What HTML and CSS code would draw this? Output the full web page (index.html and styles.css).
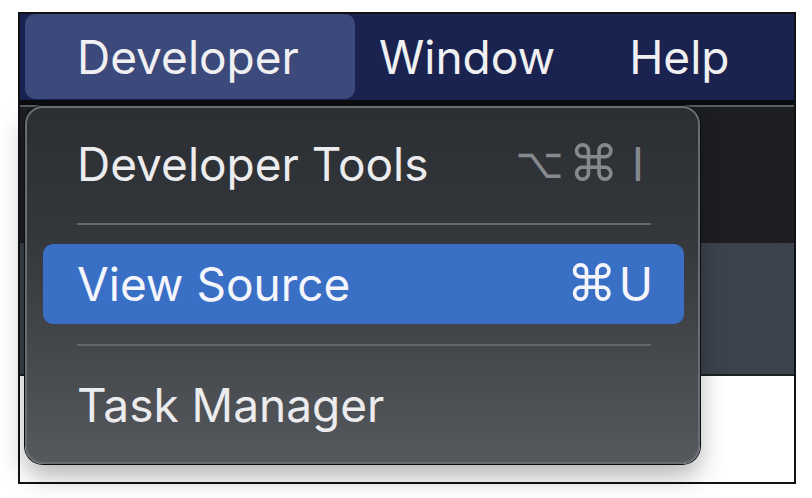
FILE: index.html
```html
<!DOCTYPE html>
<html lang="en">
<head>
<meta charset="utf-8">
<title>Developer menu</title>
<link rel="stylesheet" href="styles.css">
</head>
<body>
<div class="frame">
  <div class="menubar">
    <div class="mb-item active">Developer</div>
    <div class="mb-item window">Window</div>
    <div class="mb-item help">Help</div>
  </div>
  <div class="desk">
    <div class="win-top"></div>
    <div class="win-bottom"></div>
  </div>
  <div class="menu">
    <div class="item">
      <span class="label">Developer Tools</span>
      <span class="shortcut dim"><span class="sym opt">⌥</span><span class="sym cmd">⌘</span><span class="key">I</span></span>
    </div>
    <div class="sep"></div>
    <div class="item selected">
      <span class="label">View Source</span>
      <span class="shortcut"><span class="sym cmd">⌘</span><span class="key">U</span></span>
    </div>
    <div class="sep"></div>
    <div class="item">
      <span class="label">Task Manager</span>
    </div>
  </div>
</div>
</body>
</html>
```
FILE: styles.css
```css
* { box-sizing: border-box; }
html, body { margin: 0; padding: 0; background: #ffffff; }
body {
  width: 812px;
  height: 498px;
  overflow: hidden;
  font-family: "Inter", "Liberation Sans", "DejaVu Sans", sans-serif;
  color: #ececee;
}
.frame {
  position: relative;
  margin: 12px 0 0 18px;
  width: 778px;
  height: 472px;
  border: 2px solid #111214;
  background: #ffffff;
}
.menubar {
  display: flex;
  align-items: stretch;
  height: 91px;
  padding-bottom: 1px;
  background: #1a2350;
  border-bottom: 5px solid #0b0c10;
  font-size: 46px;
  line-height: 1;
}
.mb-item {
  display: flex;
  align-items: center;
  color: #f0f0f2;
}
.mb-item.active {
  margin-left: 5px;
  padding: 0 56px 0 52px;
  background: #3c497b;
  border-radius: 10px;
}
.mb-item.window { margin-left: 24px; }
.mb-item.help { margin-left: 74px; }
.desk { display: flex; flex-direction: column; }
.win-top {
  height: 138px;
  border-top: 2px solid #5a5d62;
  background: #1c1e22;
}
.win-bottom {
  height: 133px;
  background: linear-gradient(90deg, #3a4049, #3c434d);
  border-bottom: 2px solid #1d1f23;
}
.menu {
  position: absolute;
  left: 5px;
  top: 92px;
  width: 675px;
  padding: 16px 14px 17px 16px;
  border: 2px solid #696c71;
  border-radius: 18px;
  background: linear-gradient(180deg, #2b2e33 0%, #33363b 35%, #45484d 70%, #55585c 100%);
  box-shadow: 0 0 0 1px #0d0e10, 0 12px 26px rgba(0,0,0,0.3);
  display: flex;
  flex-direction: column;
}
.item {
  display: flex;
  align-items: center;
  justify-content: space-between;
  height: 80px;
  padding: 0 31px 0 34px;
  border-radius: 10px;
  font-size: 46px;
  line-height: 1;
}
.item.selected { background: #3a6fc6; color: #f4f6fb; }
.sep {
  height: 2px;
  margin: 19px 33px 19px 34px;
  background: #63666b;
}
.item.selected + .sep { margin-top: 20px; margin-bottom: 19px; }
.shortcut { display: flex; align-items: center; }
.shortcut.dim { color: #85888d; margin-right: 9px; }
.sym {
  font-family: "DejaVu Sans", sans-serif;
  font-size: 50px;
}
.opt { font-size: 42px; }
.dim .cmd { margin-left: 5px; }
.dim .key { margin-left: 13px; }
.key { margin-left: 2px; }
```
